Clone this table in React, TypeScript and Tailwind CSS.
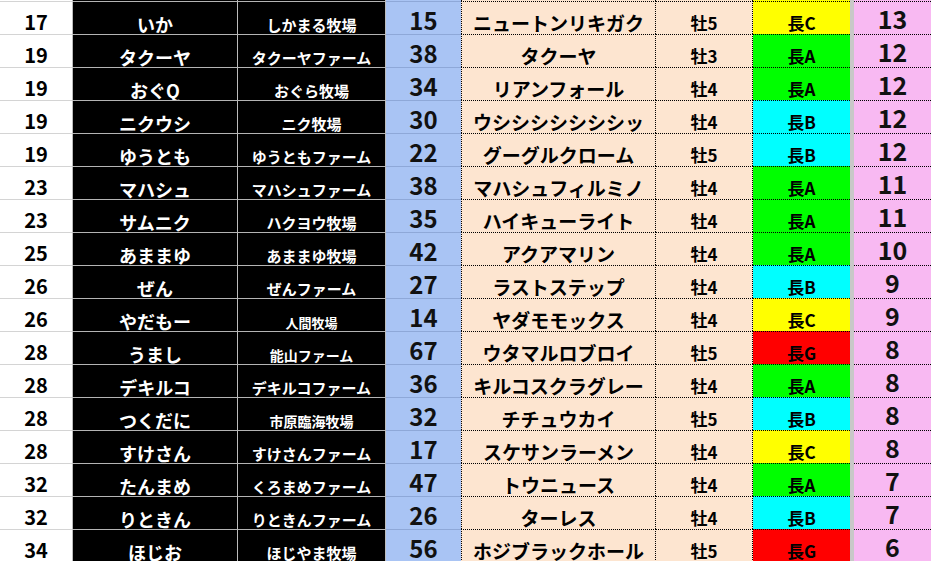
import React from "react";

type Row = [string, string, string, number, string, string, string, "A" | "B" | "C" | "G", string];

const rows: Row[] = [
  ["17", "いか", "しかまる牧場", 15, "15", "ニュートンリキガク", "牡5", "C", "13"],
  ["19", "タクーヤ", "タクーヤファーム", 15, "38", "タクーヤ", "牡3", "A", "12"],
  ["19", "おぐQ", "おぐら牧場", 15, "34", "リアンフォール", "牡4", "A", "12"],
  ["19", "ニクウシ", "ニク牧場", 15, "30", "ウシシシシシシシッ", "牡4", "B", "12"],
  ["19", "ゆうとも", "ゆうともファーム", 15, "22", "グーグルクローム", "牡5", "B", "12"],
  ["23", "マハシュ", "マハシュファーム", 15, "38", "マハシュフィルミノ", "牡4", "A", "11"],
  ["23", "サムニク", "ハクヨウ牧場", 15, "35", "ハイキューライト", "牡4", "A", "11"],
  ["25", "あままゆ", "あままゆ牧場", 15, "42", "アクアマリン", "牡4", "A", "10"],
  ["26", "ぜん", "ぜんファーム", 15, "27", "ラストステップ", "牡4", "B", "9"],
  ["26", "やだもー", "人間牧場", 13, "14", "ヤダモモックス", "牡4", "C", "9"],
  ["28", "うまし", "能山ファーム", 14, "67", "ウタマルロブロイ", "牡5", "G", "8"],
  ["28", "デキルコ", "デキルコファーム", 15, "36", "キルコスクラグレー", "牡4", "A", "8"],
  ["28", "つくだに", "市原臨海牧場", 14, "32", "チチュウカイ", "牡5", "B", "8"],
  ["28", "すけさん", "すけさんファーム", 15, "17", "スケサンラーメン", "牡4", "C", "8"],
  ["32", "たんまめ", "くろまめファーム", 15, "47", "トウニュース", "牡4", "A", "7"],
  ["32", "りときん", "りときんファーム", 15, "26", "ターレス", "牡4", "B", "7"],
  ["34", "ほじお", "ほじやま牧場", 15, "56", "ホジブラックホール", "牡5", "G", "6"],
];

const gradeBg: Record<string, string> = {
  A: "bg-[#00ff00]",
  B: "bg-[#00ffff]",
  C: "bg-[#ffff00]",
  G: "bg-[#ff0000]",
};

const font = { fontFamily: '"Noto Sans CJK JP", "Noto Sans", sans-serif' };

function TableRow({ r, first }: { r?: Row; first?: boolean }) {
  const h = first ? "h-[1px]" : "h-[33px]";
  const farmSize = r ? r[3] : 15;
  return (
    <div className={`flex ${h} overflow-hidden`}>
      <div
        className={`w-[73px] shrink-0 box-border border-r border-r-[#bcbcbc] bg-white text-black text-center text-[20px] font-bold leading-none pt-[10px] ${
          first ? "" : "border-t border-t-[#d4d4d4]"
        }`}
      >
        {r?.[0]}
      </div>
      <div
        className={`w-[165px] shrink-0 box-border border-r border-r-[#bcbcbc] bg-black text-white text-center text-[18px] font-bold leading-none pt-[13px] whitespace-nowrap ${
          first ? "" : "border-t border-t-[#b4b4b4]"
        }`}
      >
        {r?.[1]}
      </div>
      <div
        className={`w-[148px] shrink-0 box-border border-r border-r-[#bcbcbc] bg-black text-white text-center font-bold leading-none whitespace-nowrap ${
          first ? "" : "border-t border-t-[#b4b4b4]"
        }`}
        style={{ fontSize: farmSize, paddingTop: 15 + (15 - farmSize) }}
      >
        {r?.[2]}
      </div>
      <div
        className={`w-[75px] shrink-0 box-border bg-[#a9c4f4] text-[#111] text-center text-[24px] font-semibold leading-none pt-[6px] ${
          first ? "" : "border-t border-t-[#8ea8d8]"
        }`}
      >
        {r?.[4]}
      </div>
      <div
        className={`w-[195px] shrink-0 box-border border-dotted border-l border-r border-black bg-[#fde5d0] text-black text-center text-[19px] font-bold leading-none pt-[11px] whitespace-nowrap ${
          first ? "" : "border-t"
        }`}
      >
        {r?.[5]}
      </div>
      <div
        className={`w-[97px] shrink-0 box-border border-dotted border-r border-black bg-[#fde5d0] text-black text-center text-[17px] font-bold leading-none pt-[12px] ${
          first ? "" : "border-t"
        }`}
      >
        {r?.[6]}
      </div>
      <div
        className={`w-[97px] shrink-0 box-border border-dotted border-black text-black text-center text-[17px] font-bold leading-none pt-[12px] ${
          first ? "bg-[#ffff00]" : `border-t ${gradeBg[r![7]]}`
        }`}
      >
        {r ? `長${r[7]}` : ""}
      </div>
      <div className="w-[4px] shrink-0 bg-[#c8c8c8]" />
      <div
        className={`w-[77px] shrink-0 box-border border-dotted border-black bg-[#f8b9f2] text-[#111] text-center text-[25px] font-semibold leading-none pt-[4px] ${
          first ? "" : "border-t"
        }`}
      >
        {r?.[8]}
      </div>
    </div>
  );
}

export default function App() {
  return (
    <div className="w-[931px] h-[561px] overflow-hidden bg-white" style={font}>
      <TableRow first />
      {rows.map((r, i) => (
        <TableRow key={i} r={r} />
      ))}
    </div>
  );
}
